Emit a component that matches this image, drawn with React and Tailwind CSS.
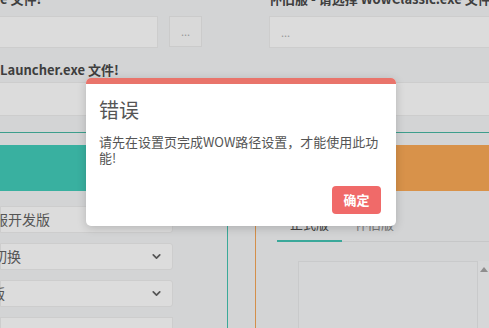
import { ChevronDown } from 'lucide-react';

const Select = ({ label, offset }) => (
  <div className="h-[27px] w-[173px] flex items-center justify-between bg-[#dcdcdc] border border-[#cdcdcd] rounded-r-[3px] pr-[9px]">
    <span className={`text-[14px] text-[#555] whitespace-nowrap ${offset}`}>{label}</span>
    <ChevronDown size={13} strokeWidth={3.2} className="text-[#555]" />
  </div>
);

const App = () => {
  return (
    <div className="relative w-[489px] h-[328px] overflow-hidden bg-[#d3d4d5] font-['Noto_Sans_CJK_SC',sans-serif]">
      {/* page under the overlay */}
      <div className="flex flex-col -mt-[9px]">
        <div className="flex">
          <div className="w-[269px] shrink-0 flex flex-col">
            <div className="h-[16px] leading-[16px] text-[13px] font-bold text-[#3e3e3e] whitespace-nowrap">e 文件!</div>
            <div className="mt-[9px] flex gap-[11px]">
              <div className="w-[158px] h-[32px] bg-[#dcdcdc] border border-[#cdcdcd] border-l-0" />
              <div className="w-[33px] h-[31px] bg-[#d9d9d9] border border-[#cbcbcb] flex items-center justify-center text-[11px] text-[#9a9a9a]">...</div>
            </div>
          </div>
          <div className="flex-1 min-w-0 flex flex-col">
            <div className="h-[16px] leading-[16px] text-[13px] font-bold text-[#3e3e3e] whitespace-nowrap">怀旧服 - 请选择 WowClassic.exe 文件!</div>
            <div className="mt-[9px] h-[32px] bg-[#dcdcdc] border border-[#cdcdcd] border-r-0 flex items-center pl-[11px] text-[11px] text-[#9a9a9a]">...</div>
          </div>
        </div>

        <div className="mt-[14px] h-[16px] leading-[16px] text-[13px] font-bold text-[#3e3e3e] whitespace-nowrap">Launcher.exe 文件!</div>
        <div className="mt-[4px] h-[34px] bg-[#dcdcdc] border-y border-[#cdcdcd]" />

        <div className="mt-[16px] h-px bg-[#3d9e8c]" />

        <div className="mt-[12px] flex gap-[27px]">
          {/* left card */}
          <div className="w-[228px] shrink-0 h-[200px] border-r border-[#3aa999] flex flex-col">
            <div className="h-[46px] bg-[#39b0a0]" />
            <div className="mt-[15px] flex flex-col gap-[10px]">
              <div className="h-[27px] w-[173px] flex items-center bg-[#dcdcdc] border border-[#cdcdcd] rounded-r-[3px]">
                <span className="text-[14px] text-[#555] whitespace-nowrap -ml-[7px]">服开发版</span>
              </div>
              <Select label="切换" offset="-ml-[8px]" />
              <Select label="版" offset="-ml-[10px]" />
              <div className="h-[27px] w-[173px] bg-[#dcdcdc] border border-[#cdcdcd]" />
            </div>
          </div>

          {/* right card */}
          <div className="flex-1 h-[200px] border-l border-[#d38f4b] flex flex-col">
            <div className="h-[46px] bg-[#d8924a]" />
            <div className="mt-[16px] ml-[21px] flex border-b border-[#c6c7c8] h-[35px]">
              <div className="w-[65px] flex items-center justify-center text-[13px] text-[#444] border-b-2 border-[#3aa89a] -mb-px">正式版</div>
              <div className="w-[65px] flex items-center justify-center text-[13px] text-[#7a7a7a]">怀旧版</div>
            </div>
            <div className="mt-[19px] ml-[42px] flex flex-1">
              <div className="w-[180px] bg-[#d5d6d7] border border-[#c9cacb]" />
              <div className="flex-1 bg-[#d6d7d8] flex justify-center pt-[6px]">
                <div className="w-0 h-0 border-x-[4px] border-x-transparent border-b-[5px] border-b-[#8e8e8e]" />
              </div>
            </div>
          </div>
        </div>
      </div>

      {/* error dialog */}
      <div className="absolute left-[86px] top-[78px] w-[310px] h-[148px] bg-white rounded-[5px] overflow-hidden shadow-[0_2px_10px_rgba(0,0,0,0.18)] flex flex-col">
        <div className="h-[6px] bg-[#e9746b]" />
        <div className="pt-[12px] pl-[13px] text-[20px] leading-[28px] text-[#555]">错误</div>
        <div className="mt-[10px] ml-[13px] w-[284px] text-[13px] leading-[16px] text-[#555]">
          请先在设置页完成WOW路径设置，才能使用此功能!
        </div>
        <div className="mt-auto mb-[12px] mr-[15px] flex justify-end">
          <button className="w-[49px] h-[28px] rounded-[4px] bg-[#f06a69] text-white text-[13px] font-bold">确定</button>
        </div>
      </div>
    </div>
  );
};

export default App;
